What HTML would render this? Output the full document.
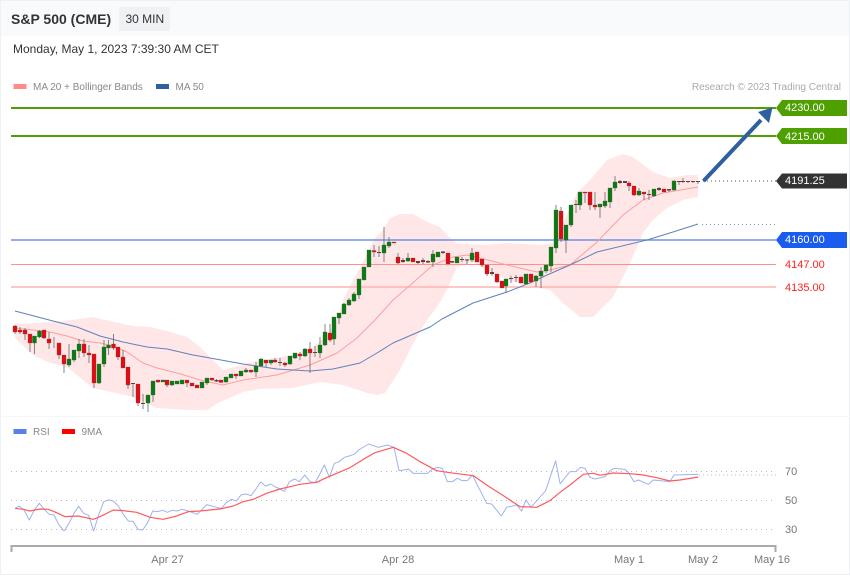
<!DOCTYPE html>
<html><head><meta charset="utf-8"><style>
html,body{margin:0;padding:0;background:#fff}
body{width:850px;height:576px;overflow:hidden;position:relative;font-family:"Liberation Sans",sans-serif}
svg{position:absolute;left:0;top:0}
</style></head><body>
<svg width="850" height="576" viewBox="0 0 850 576" font-family="'Liberation Sans',sans-serif">
<rect x="0" y="0" width="850" height="36" fill="#f9fafc"/>
<rect x="0.5" y="0.5" width="849" height="574" fill="none" stroke="#edf0f6" stroke-width="1"/>
<rect x="0" y="575" width="850" height="1" fill="#fff"/>
<rect x="119" y="7" width="51" height="24" fill="#eff1f4"/>
<text x="11" y="24" font-size="14" font-weight="bold" fill="#333">S&amp;P 500 (CME)</text>
<text x="125.500" y="23" font-size="12" fill="#333">30 MIN</text>
<text x="13" y="53" font-size="12" fill="#333">Monday, May 1, 2023 7:39:30 AM CET</text>
<rect x="13.500" y="84" width="13" height="5" fill="#ff8a8a"/>
<text x="33" y="90" font-size="10" fill="#888">MA 20 + Bollinger Bands</text>
<rect x="156" y="84" width="13" height="5" fill="#2f5f9e"/>
<text x="175.500" y="90" font-size="10" fill="#888">MA 50</text>
<text x="841" y="90" font-size="10" fill="#aaa" text-anchor="end">Research © 2023 Trading Central</text>

<path d="M15 324L33 323L53 322L72 320L93 317L110 321L133 326L150 327L167 331L187 337L200 347L213 360L223 370L238 366L253 362L275 358L293 355L313 347L327 335L337 320L343 300L352 282L360 268L368 252L375 238L383 230L390 218L400 214L413 214L427 222L440 227L450 238L457 243L483 245L507 243L540 245L553 243L562 225L577 193L590 180L607 160L623 154L633 157L653 172L670 178L687 175L698 175L698 197L683 200L667 208L653 220L643 233L630 263L613 297L593 317L580 317L563 303L550 290L533 287L507 280L487 270L473 262L457 267L447 290L437 307L427 320L415 340L400 370L385 393L377 395L367 393L343 385L320 382L293 388L260 389L243 392L227 399L220 402L207 410L187 410L157 408L133 397L93 388L67 367L50 363L33 355L15 338Z" fill="#ffe7e8"/>

<path d="M11 108H776M11 136H776" stroke="#4da000" stroke-width="2" fill="none"/>
<path d="M11 240H776" stroke="#6f94ec" stroke-width="1.500" fill="none"/>
<path d="M11 264.500H776" stroke="#ff8f8f" stroke-width="1" fill="none"/>
<path d="M11 287H776" stroke="#ffb3b3" stroke-width="1.500" fill="none"/>

<polyline points="15,328 33,330 50,332 67,336 83,341 100,343 113,346 127,352 143,363 157,368 177,373 200,380 223,385 243,380 277,375 310,365 337,353 357,338 375,320 393,300 407,288 433,265 453,257 467,255 480,258 507,265 537,272 550,270 570,265 597,242 623,215 643,200 663,193 698,187" fill="none" stroke="#ff9d9d" stroke-width="1" stroke-linejoin="round"/>
<polyline points="15,311 53,321 77,327 100,336 123,342 147,347 167,349 193,355 210,358 243,364 277,369 310,371 333,369 360,363 377,353 393,343 430,327 442,319 473,303 507,292 530,283 547,275 570,265 597,252 647,240 673,232 698,224" fill="none" stroke="#5f82bb" stroke-width="1" stroke-linejoin="round"/>
<path d="M702 224.500H776" stroke="#7d96c4" stroke-width="1" stroke-dasharray="1 3" fill="none"/>
<path d="M703 181H776" stroke="#555" stroke-width="1" stroke-dasharray="1 3" fill="none"/>

<path fill="none" stroke="#666" stroke-opacity=".8" stroke-width="1" d="M15 325V334M20 327V334M25 328V340M30 334V352M34.500 336V354M39.500 330V338M44 330V339M49 332V349M54 337V348M59 343V359M64 355V373M69 344V367M74 350V362M79 339V358M84 339V357M89 345V363M94 354V388M99 364V384M104 340V367M108.500 340V355M113.500 334V350M118 347V360M123 350V368M128 367V389M133 383V397M138 384V406M143 394V409M148 395V412M153 381V402M158 380V383M163 380V382M167 380V387M172 381V386M177 381V384M182 380V384M187 380V387M192 383V386M197 385V388M202 382V388M207 378V385M212 378V381M216.500 379V382M221 380V382.500M226 377V383M231 374V378M236 374V379M241 371V376M246 368V373M251 370V373M256 362V377M261 358V367M266 360V367M271 360V365M275 358V363M280 358V366M285 362V367M290 356V365M295 353V359M300 352V360M305 348V357M310 342V373M315 346V357M320 337V358M325 324V346M330 324V342M334 317V345M339 313V324M344 303V314M349 298V306M354 292V302M359 279V299M364 267V280M369 250V267M374 245V257M379 246V257M384 227V262M389 237V248M394 242V243M398 253V264M403 258V263M408 253V262M413 258V262M418 261V264M423 258V264M428 260V263M433 250V267M438 252V257M443 251V254M448 253V264M452 261V263M457 257V263M462 257V262M467 259V264M472 248V262M477 252V262M482 259V267M487 265V276M492 268V276M497 274V283M502 281V288M506 279V293M511 276V283M516 275V282M521 277V283M526 274V284M531 274V282M536 275V287M541 267V288M546 265V273M551 247V272M556 205V253M561 207V242M566 225V253M571 205V227M576 200V213M580 192V210M585 192V203M590 192V210M595 192V210M600 204V218M605 192V208M610 188V208M615 176V191M620 180V184M625 181V183M629 181V191M634 186V196M639 188V196M644 192V200M649 190V200M654 189V197M659 187V191M664 189V192M669 189V192M674 180V191M679 181V185M683 178V183M688 181V183M693 181V183M698 181V184"/>

<path fill="#e30b12" stroke="#7a4a4a" stroke-opacity=".6" stroke-width=".5" d="M13 326h4V332h-4zM18 330h4V332h-4zM23 330h4V334h-4zM28 334h4V343h-4zM42 330h4V338h-4zM47 339h4V343h-4zM57 343h4V355h-4zM62 355h4V364h-4zM82 344h4V353h-4zM87 353h4V355h-4zM92 354h4V383h-4zM111.500 344h4V348h-4zM116 347h4V357h-4zM121 357h4V368h-4zM126 367h4V385h-4zM136 384h4V403h-4zM156 380h4V382h-4zM165 380h4V385h-4zM185 380h4V383h-4zM190 383h4V386h-4zM195 385h4V388h-4zM210 378h4V380h-4zM219 380h4V382.500h-4zM234 374h4V376h-4zM249 370h4V372h-4zM264 360h4V363h-4zM273 360h4V362h-4zM283 363h4V365h-4zM298 354h4V356h-4zM308 349h4V353h-4zM328 333h4V340h-4zM372 250.500h4V252h-4zM392 242h4V243h-4zM396 257h4V263h-4zM411 258h4V262h-4zM446 253h4V264h-4zM475 252h4V262h-4zM480 259h4V265h-4zM485 265h4V274h-4zM495 274h4V282h-4zM500 281h4V288h-4zM519 277h4V283h-4zM529 274h4V282h-4zM559 211h4V239h-4zM583 192h4V193h-4zM588 192h4V205h-4zM593 205h4V207h-4zM627 183h4V186h-4zM632 186h4V195h-4zM642 192h4V194h-4zM662 189h4V192h-4z"/>

<path fill="#0c7a12" stroke="#3f5f3f" stroke-opacity=".6" stroke-width=".5" d="M32.500 336h4V343h-4zM37.500 331h4V337h-4zM67 359h4V365h-4zM72 350h4V360h-4zM77 344h4V351h-4zM97 364h4V383h-4zM102 347h4V364h-4zM106.500 345h4V348h-4zM146 395h4V403h-4zM151 381h4V395h-4zM161 380h4V382h-4zM170 381h4V385h-4zM175 381h4V384h-4zM180 380h4V384h-4zM200 382h4V388h-4zM205 378h4V383h-4zM224 377h4V382h-4zM229 374h4V378h-4zM239 371h4V376h-4zM244 370h4V372h-4zM254 366h4V372h-4zM259 359h4V366h-4zM269 360h4V363h-4zM288 356h4V364h-4zM293 353h4V358h-4zM303 349h4V356h-4zM318 345h4V353h-4zM323 332h4V345h-4zM332 317h4V339h-4zM337 313h4V318h-4zM342 304h4V314h-4zM347 300h4V305h-4zM352 294h4V301h-4zM357 279h4V295h-4zM362 267h4V280h-4zM367 250h4V267h-4zM382 245h4V253h-4zM387 242h4V246h-4zM406 258h4V261h-4zM431 254h4V262h-4zM436 252h4V257h-4zM455 257h4V263h-4zM470 253h4V260h-4zM504 279h4V286h-4zM524 274h4V284h-4zM534 276h4V281h-4zM539 271h4V276h-4zM544 265h4V271h-4zM549 247h4V266h-4zM554 210h4V248h-4zM564 225h4V240h-4zM569 205h4V225h-4zM578 192h4V205h-4zM598 204h4V207h-4zM603 201h4V206h-4zM608 188h4V202h-4zM613 182h4V188h-4zM637 191h4V195h-4zM652 189h4V196h-4zM672 181h4V190h-4z"/>

<path fill="#6b3a3a" d="M131 383h4V384h-4zM141 403h4V404h-4zM214.500 380h4V381.500h-4zM278 362h4V363h-4zM313 352h4V353h-4zM377 252h4V253h-4zM401 260h4V262h-4zM416 261h4V263h-4zM421 260h4V262h-4zM426 261h4V262.500h-4zM441 251.500h4V253h-4zM450 261h4V262.500h-4zM460 259h4V260h-4zM465 259.500h4V260.500h-4zM490 272h4V274h-4zM509 278h4V279h-4zM514 277h4V278h-4zM574 204h4V205h-4zM618 181h4V183h-4zM623 181h4V183h-4zM647 194h4V195h-4zM657 188h4V190h-4zM667 189h4V190.500h-4zM677 181h4V182h-4zM681 181h4V182h-4zM686 181h4V182h-4zM691 181h4V182h-4zM696 181h4V182h-4z"/>

<path d="M703.500 181L761 120" stroke="#2e5f9e" stroke-width="4" fill="none"/>
<path d="M772.500 107.500L758 112L769 123Z" fill="#2e5f9e"/>

<g font-size="11">
<path d="M776 108L782 100H847V116H782Z" fill="#4da000"/><text x="785" y="111" fill="#fff">4230.00</text>
<path d="M776 136L782 128H847V144H782Z" fill="#4da000"/><text x="785" y="140" fill="#fff">4215.00</text>
<path d="M776 181L782 173.500H847V188.500H782Z" fill="#333"/><text x="785" y="184" fill="#fff">4191.25</text>
<path d="M776 240L782 232H847V248H782Z" fill="#1a5cf0"/><text x="785" y="243" fill="#fff">4160.00</text>
<text x="785" y="268" fill="#f22">4147.00</text>
<text x="785" y="291" fill="#f22">4135.00</text>
</g>

<path d="M0 416.500H850" stroke="#f6f7f9" stroke-width="1"/>
<rect x="13.500" y="429" width="13" height="5" fill="#5b7fe8"/>
<text x="33" y="435" font-size="10" fill="#888">RSI</text>
<rect x="62" y="429" width="13" height="5" fill="#f00"/>
<text x="81.500" y="435" font-size="10" fill="#888">9MA</text>

<path d="M11 471.500H776M11 500.500H776M11 529.500H776" stroke="#bbb" stroke-width="1" stroke-dasharray="1 4" fill="none"/>
<path d="M699 475H776" stroke="#a8bdf2" stroke-width="1" stroke-dasharray="1 3" fill="none"/>

<g fill="none" stroke="#9cb3ee" stroke-width="3" stroke-linejoin="round">
<polyline transform="translate(0,420) scale(.3333)" points="45,266 57,258 72,270 88,300 103,270 118,250 133,268 148,283 162,285 177,315 192,333 207,310 222,280 236,259 251,280 266,286 281,333 296,285 311,245 325,240 340,243 355,258 370,283 385,303 399,304 414,328 428,330 443,308 458,273 473,275 488,271 502,277 517,271 532,273 546,268 561,272 576,277 591,283 605,270 620,254 635,258 650,262 664,265 679,248 694,238 709,243 723,225 738,222 753,227 768,207 782,186 797,198 812,192 827,201 840,207"/>
<polyline transform="translate(280,430) scale(.3333)" points="0,178 14,184 28,155 44,147 58,155 74,135 90,155 105,158 118,135 133,105 148,142 163,100 178,95 193,82 207,78 222,73 236,60 266,42 295,52 322,45 342,52 357,122 372,120 385,117 400,130 442,130 458,117 472,112 487,115 502,155 517,155 532,145 547,152 562,152 577,135 620,220 635,222 664,258 680,232 710,225 725,243 738,210 753,232 797,182 827,92 840,160"/>
<polyline transform="translate(560,430) scale(.3333)" points="0,162 30,125 47,125 62,112 75,115 90,142 105,147 135,140 150,122 163,115 195,118 205,127 222,155 235,150 265,163 280,150 330,155 342,135 415,133"/>
</g>
<g fill="none" stroke="#ff5a5f" stroke-width="3.600" stroke-linejoin="round">
<polyline transform="translate(0,420) scale(.3333)" points="45,265 70,268 90,273 120,267 145,268 170,278 195,290 235,288 280,298 300,290 340,270 370,272 410,277 450,292 490,298 530,288 565,275 600,273 660,267 700,258 730,245 760,238 800,220 840,207"/>
<polyline transform="translate(280,430) scale(.3333)" points="0,177 30,170 60,163 110,157 135,145 170,130 210,113 250,88 285,68 340,52 380,70 420,95 470,122 510,128 580,137 620,165 670,197 720,230 770,232 810,212 840,187"/>
<polyline transform="translate(560,430) scale(.3333)" points="0,187 30,165 70,133 100,130 120,136 160,129 210,131 250,135 290,143 330,153 360,150 415,141"/>
</g>

<g font-size="11" fill="#777">
<text x="785" y="475">70</text>
<text x="785" y="504">50</text>
<text x="785" y="533">30</text>
</g>
<path d="M11.500 552V546H775.500V552" stroke="#aaa" stroke-width="2" fill="none"/>
<g font-size="11" fill="#777" text-anchor="middle">
<text x="167.500" y="563">Apr 27</text>
<text x="398" y="563">Apr 28</text>
<text x="629" y="563">May 1</text>
<text x="703" y="563">May 2</text>
<text x="772" y="563">May 16</text>
</g>
</svg>
</body></html>
